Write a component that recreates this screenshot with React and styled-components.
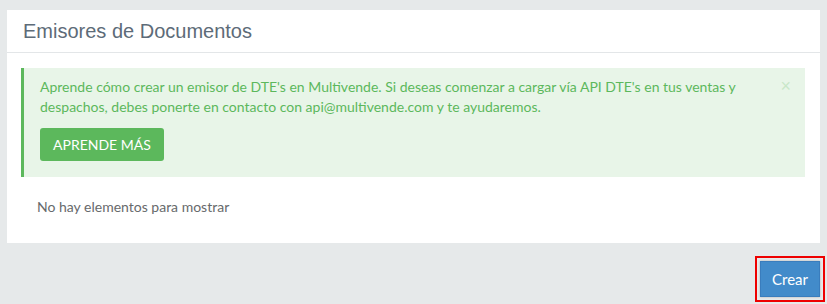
import React from 'react'
import styled, { createGlobalStyle } from 'styled-components'

const Global = createGlobalStyle`
    body {
        margin      : 0;
        background  : #e6e9ea;
        font-family : Lato, 'Open Sans', sans-serif;
    }
`

const Page = styled.div`
    padding : 10px 7px 0;
`

const Panel = styled.section`
    background : #fff;
`

const PanelHeader = styled.header`
    height        : 42px;
    padding       : 0 16px;
    display       : flex;
    align-items   : center;
    border-bottom : 1px solid #e3e6e8;

    h1 {
        margin      : 0;
        font-family : 'Liberation Sans', Arial, sans-serif;
        font-size   : 20px;
        font-weight : 400;
        color       : #5d6b78;
    }
`

const PanelBody = styled.div`
    padding : 15px 15px 28px 14px;
`

const Alert = styled.div`
    position    : relative;
    background  : #e8f5e8;
    border-left : 3px solid #5cb85c;
    padding     : 9px 60px 16px 16px;
    color       : #5cb85c;
    font-size   : 14px;
    line-height : 20px;

    p {
        margin : 0 0 11px;
    }
`

const Close = styled.span`
    position    : absolute;
    top         : 8px;
    right       : 14px;
    font-family : 'Liberation Sans', Arial, sans-serif;
    font-size   : 18px;
    color       : #c9e7c9;
`

const GreenButton = styled.button`
    height        : 33px;
    padding       : 0 13px;
    border        : none;
    border-radius : 3px;
    background    : #5cb85c;
    color         : #fff;
    font-family   : Lato, sans-serif;
    font-size     : 14px;
`

const Empty = styled.p`
    margin      : 21px 0 0 16px;
    font-size   : 14px;
    color       : #676a6c;
`

const Actions = styled.div`
    display         : flex;
    justify-content : flex-end;
    padding         : 13px 0 0;
    margin-right    : -5px;
`

const Highlight = styled.div`
    border     : 2px solid #ee0000;
    padding    : 3px;
    background : #e6e9ea;
`

const BlueButton = styled.button`
    width       : 60px;
    height      : 36px;
    border      : 1px solid #3a7dbd;
    background  : #428bca;
    color       : #fff;
    font-family : Lato, sans-serif;
    font-size   : 15px;
    box-shadow  : 0 0 2px rgba(0,0,0,0.25);
`

const App = () => (
    <Page>
        <Global />
        <Panel>
            <PanelHeader>
                <h1>Emisores de Documentos</h1>
            </PanelHeader>
            <PanelBody>
                <Alert>
                    <Close>×</Close>
                    <p>Aprende cómo crear un emisor de DTE's en Multivende. Si deseas comenzar a cargar vía API DTE's en tus ventas y despachos, debes ponerte en contacto con api@multivende.com y te ayudaremos.</p>
                    <GreenButton>APRENDE MÁS</GreenButton>
                </Alert>
                <Empty>No hay elementos para mostrar</Empty>
            </PanelBody>
        </Panel>
        <Actions>
            <Highlight>
                <BlueButton>Crear</BlueButton>
            </Highlight>
        </Actions>
    </Page>
)

export default App
